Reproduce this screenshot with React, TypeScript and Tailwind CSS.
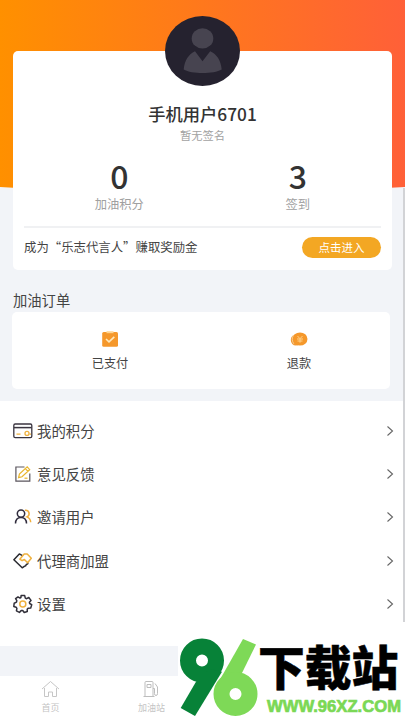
import type { ReactNode } from "react";

const stats = [
  { value: "0", label: "加油积分" },
  { value: "3", label: "签到" },
];

const CardIcon = () => (
  <svg className="w-5 h-5" viewBox="0 0 20 20" fill="none" strokeWidth="1.3">
    <rect x="0.8" y="3" width="18" height="13.6" rx="1.4" stroke="#3b3540" />
    <path d="M1 6.6h17.6" stroke="#3b3540" strokeWidth="1.5" />
    <path d="M3.5 13.2h4M16.5 13.2h1.5" stroke="#efb13e" />
    <circle cx="14" cy="12.4" r="2" stroke="#efb13e" />
  </svg>
);

const EditIcon = () => (
  <svg className="w-5 h-5" viewBox="0 0 20 20" fill="none" strokeWidth="1.2">
    <path d="M11.5 3H2.9v14.2h13.9V9.5" stroke="#5b565e" />
    <path d="M5.6 13.6l.8-3.6 7.8-7.1 2.5 2.7-7.7 7.2zM12.4 4.6l2.5 2.7" stroke="#e9b52d" />
    <path d="M11.5 14.2h3" stroke="#e9b52d" />
  </svg>
);

const UsersIcon = () => (
  <svg className="w-5 h-5" viewBox="0 0 20 20" fill="none" strokeWidth="1.5">
    <path d="M12 3.2c4.4-.5 5.6 5 1.9 6.7 2.2.8 3.6 2.7 3.8 5.4" stroke="#f0ae3b" />
    <circle cx="8" cy="6.6" r="3.7" stroke="#302c3d" />
    <path d="M2.5 16.4c.1-3.7 2.2-6 5.5-6s5.4 2.3 5.5 6" stroke="#302c3d" />
  </svg>
);

const HandshakeIcon = () => (
  <svg className="w-5 h-5" viewBox="0 0 20 20" fill="none" strokeWidth="1.5" strokeLinejoin="round">
    <path d="M9.5 4.6L6.3 2.9.9 8.7l8.3 8.1 2.1-1.5 1.3-.4.7-1.4 1.4-.6.3-1.5" stroke="#292a30" />
    <path d="M6.8 8.2L11.2 3h3l4.1 4.3-3.7 4.4-3.2-3.3-2.3 1.3z" stroke="#efb13e" />
  </svg>
);

const GearIcon = () => (
  <svg className="w-5 h-5" viewBox="0 0 20 20" fill="none" strokeWidth="1.5" strokeLinejoin="round">
    <path
      d="M8.1 1.6h3.6l.6 2.5 1.3.6 2.2-1.2 2.2 2.9-1.6 1.8.2 1.3 2.1 1.2-1 3.4-2.6.1-.9 1.1.1 2.2-3.1 1-1.5-2-1.5.1-1.8 1.8-3-1.6.5-2.4-.8-1.2-2.3-.7L1.2 9.2l2.3-1.1.3-1.4-1.2-2L5 2.9l2 1.2.9-.5z"
      stroke="#32303a"
    />
    <circle cx="9.8" cy="9.9" r="3" stroke="#efb13e" />
  </svg>
);

const menu: { label: string; icon: ReactNode }[] = [
  { label: "我的积分", icon: <CardIcon /> },
  { label: "意见反馈", icon: <EditIcon /> },
  { label: "邀请用户", icon: <UsersIcon /> },
  { label: "代理商加盟", icon: <HandshakeIcon /> },
  { label: "设置", icon: <GearIcon /> },
];

function Avatar() {
  return (
    <svg className="absolute -top-[35px] left-[152px] w-[75px] h-[70px]" viewBox="0 0 75 70">
      <ellipse cx="37.5" cy="35" rx="37.5" ry="35" fill="#25222f" />
      <ellipse cx="37.5" cy="22.4" rx="10.8" ry="10.2" fill="#474450" />
      <path d="M30 35.2l7.5 10 7.7-10c6.5 3 10.8 9 11.5 18.2-8 4.7-30 4.7-38 0 .8-9 5-15.2 11.3-18.2z" fill="#474450" />
    </svg>
  );
}

function ProfileCard() {
  return (
    <div className="relative mt-[51px] ml-[13px] w-[379px] h-[219px] rounded-[5px] bg-white px-[11px]">
      <Avatar />
      <h1 className="pt-[51px] text-center text-[17.3px] leading-6 font-medium text-[#333]">手机用户6701</h1>
      <p className="mt-px text-center text-[11.3px] leading-4 text-[#a2a2a2]">暂无签名</p>
      <div className="mt-[14px] flex pl-[6px] -mr-[6px]">
        {stats.map((s) => (
          <div key={s.label} className="w-1/2 text-center">
            <div className="text-[32px] leading-9 font-medium text-[#333]">{s.value}</div>
            <div className="mt-[2px] text-[12.3px] leading-[18px] text-[#a0a0a0]">{s.label}</div>
          </div>
        ))}
      </div>
      <div className="mt-[13px] border-t-2 border-[#f0f1f3] pt-[9px] flex items-center justify-between">
        <span className="text-[12.4px] leading-[21px] text-[#444]">成为“乐志代言人”赚取奖励金</span>
        <button className="w-[79px] h-[21px] rounded-full bg-[#f3a723] text-[11.5px] leading-[21px] text-white">
          点击进入
        </button>
      </div>
    </div>
  );
}

function Orders() {
  return (
    <section className="pt-[18px]">
      <h2 className="pl-[13px] pb-px text-[14.3px] leading-[23px] text-[#444]">加油订单</h2>
      <div className="ml-3 w-[378px] h-[77px] rounded-[5px] bg-white flex text-center text-[12.2px] text-[#444]">
        <div className="w-[196px] flex flex-col items-center pt-[18px]">
          <svg className="w-[18px] h-[18px]" viewBox="0 0 18 18">
            <rect x="1.2" y="2" width="15.8" height="14.8" rx="1.5" fill="#f5982b" />
            <path d="M5.5 1.2h7v2h-7z" fill="#ffd694" />
            <path d="M5 9l3 2.8 5.3-5" fill="none" stroke="#ffe9bd" strokeWidth="1.6" />
          </svg>
          <span className="mt-[6px] leading-[18px]">已支付</span>
        </div>
        <div className="w-[182px] flex flex-col items-center pt-[18px]">
          <svg className="w-[18px] h-[18px]" viewBox="0 0 18 18">
            <ellipse cx="5.8" cy="10" rx="5" ry="5.6" fill="#ef9a38" />
            <ellipse cx="10" cy="9" rx="7.5" ry="6.6" fill="#f5982b" />
            <path d="M3.5 5.2C1.7 8 1.9 11 3.8 13.8" fill="none" stroke="#ffe2b5" strokeWidth="0.7" />
            <path d="M7.5 6l2.5 2.7L12.5 6M7 9h6M7.5 11h5M10 8.7v4" fill="none" stroke="#ffd18a" />
          </svg>
          <span className="mt-[6px] leading-[18px]">退款</span>
        </div>
      </div>
    </section>
  );
}

function Menu() {
  return (
    <ul className="mt-3 h-[245px] bg-white pt-2">
      {menu.map((item) => (
        <li key={item.label} className="h-[43.4px] pl-[13px] pr-[11px] flex items-center">
          {item.icon}
          <span className="ml-[4px] text-[14.4px] leading-5 text-[#444]">{item.label}</span>
          <svg className="ml-auto w-2 h-3" viewBox="0 0 8 12" fill="none" stroke="#666" strokeWidth="1.1">
            <path d="M1.5 1.5L6.5 6l-5 4.5" />
          </svg>
        </li>
      ))}
    </ul>
  );
}

function TabBar() {
  return (
    <nav className="mt-[30px] h-11 bg-white flex text-[9px] text-[#c4c4c4]">
      <div className="w-[101px] flex flex-col items-center pt-1">
        <svg className="w-[19px] h-[19px]" viewBox="0 0 19 19" fill="none" stroke="#c6c6c6">
          <path d="M1 9l8.5-7.5L18 9M3.5 8v8.5h4V12h4v4.5h4V8" />
        </svg>
        <span className="mt-[3px] leading-3">首页</span>
      </div>
      <div className="w-[101px] flex flex-col items-center pt-1">
        <svg className="w-[19px] h-[19px]" viewBox="0 0 19 19" fill="none" stroke="#bdbdbd">
          <path d="M3 16.5v-14q0-1 1-1h6q1 0 1 1v14M1.5 16.5h11M5 4.5h4v3H5zM11 8.5h1.5v5q0 2 1.5 2t1.5-2V7L13 3.5" />
        </svg>
        <span className="mt-[3px] leading-3">加油站</span>
      </div>
    </nav>
  );
}

function SiteBadge() {
  return (
    <div className="absolute left-[178px] top-[637px] w-[227px] h-[83px] bg-white flex">
      <svg className="w-[80px] h-[83px] shrink-0" viewBox="0 0 80 83">
        <circle cx="24" cy="23.5" r="14" fill="none" stroke="#078238" strokeWidth="16" />
        <path d="M2.7 71L18 44.7 32 32l12 2.7L17 79z" fill="#078238" />
        <path d="M65 2l13 5.5L64 36 50 49 36 53z" fill="#7ed957" />
        <circle cx="57.5" cy="57" r="14" fill="none" stroke="#7ed957" strokeWidth="16" />
      </svg>
      <div className="w-[147px] shrink-0">
        <div className="h-[59px] whitespace-nowrap text-[46.8px] leading-[56px] font-black text-black [-webkit-text-stroke:0.5px_black]">
          下载站
        </div>
        <svg className="w-[147px] h-5" viewBox="0 0 147 20">
          <text
            x="9"
            y="16"
            textLength="134"
            lengthAdjust="spacingAndGlyphs"
            fill="#7bd855"
            stroke="#7bd855"
            strokeWidth="0.7"
            className="font-['Liberation_Sans',sans-serif] text-[17px] font-bold"
          >
            WWW.96XZ.COM
          </text>
        </svg>
      </div>
    </div>
  );
}

export default function App() {
  return (
    <div className="relative w-[405px] h-[720px] overflow-hidden bg-[#f2f4f8] font-['Noto_Sans_CJK_SC',sans-serif]">
      <svg className="absolute left-0 top-0 w-[405px] h-[200px]" viewBox="0 0 405 200">
        <defs>
          <linearGradient id="sunset">
            <stop offset="0" stopColor="#ff9000" />
            <stop offset="1" stopColor="#ff6038" />
          </linearGradient>
        </defs>
        <path d="M0 0h405v187Q202 200 0 187z" fill="url(#sunset)" />
      </svg>
      <div className="flow-root">
        <ProfileCard />
        <Orders />
        <Menu />
        <TabBar />
      </div>
      <div className="absolute right-0 top-[188px] w-[2px] h-[434px] bg-[#d2d3d6]" />
      <SiteBadge />
    </div>
  );
}
